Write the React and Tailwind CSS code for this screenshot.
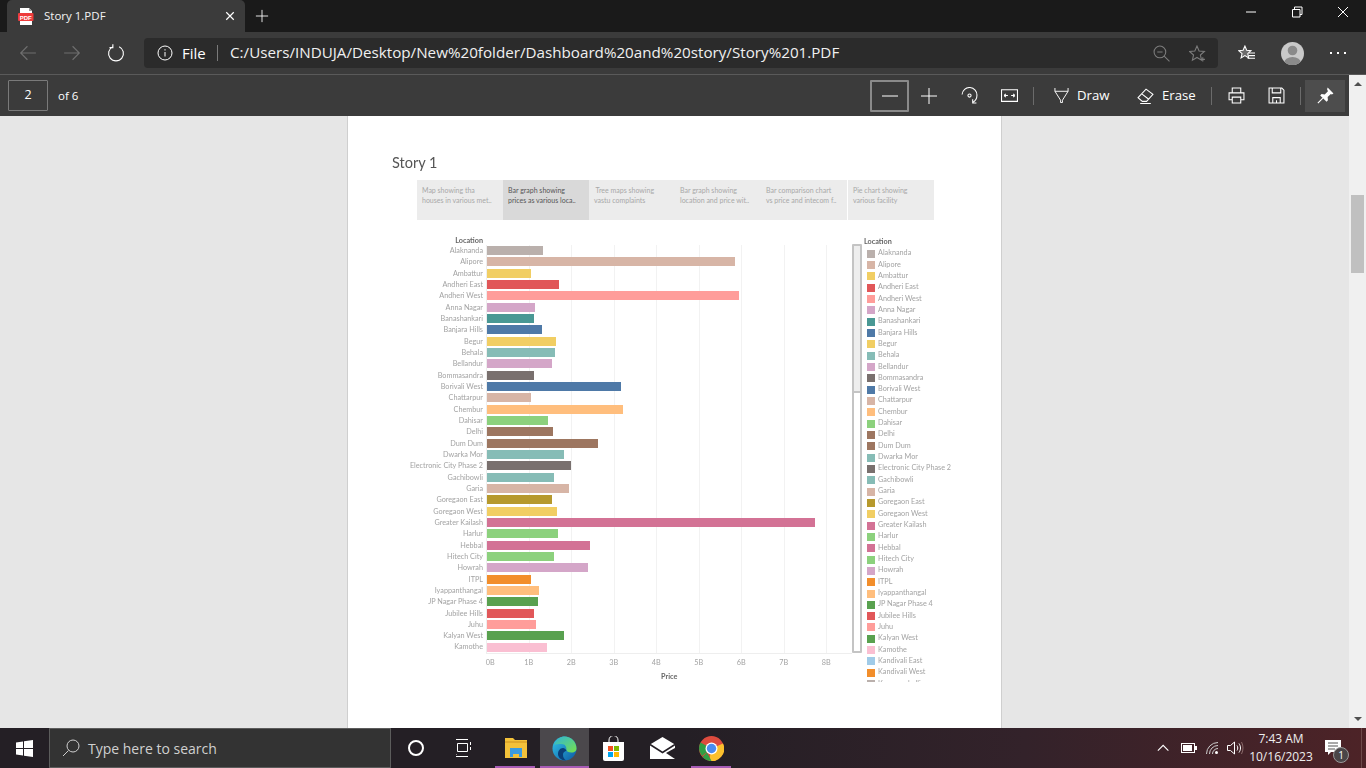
import React from "react";

const C = {
  gray: "#bab0ac",
  tan: "#d7b5a6",
  yellow: "#f1ce63",
  red: "#e15759",
  pink: "#ff9d9a",
  lilac: "#d4a6c8",
  teal: "#499894",
  blue: "#4e79a7",
  aqua: "#86bcb6",
  dark: "#79706e",
  peach: "#ffbe7d",
  green: "#8cd17d",
  brown: "#9d7660",
  olive: "#b6992d",
  rose: "#d37295",
  orange: "#f28e2b",
  leaf: "#59a14f",
  candy: "#fabfd2",
  sky: "#a0cbe8",
};

const rows = [
  ["Alaknanda", C.gray, 543],
  ["Alipore", C.tan, 735],
  ["Ambattur", C.yellow, 531],
  ["Andheri East", C.red, 559],
  ["Andheri West", C.pink, 739],
  ["Anna Nagar", C.lilac, 535],
  ["Banashankari", C.teal, 534],
  ["Banjara Hills", C.blue, 542],
  ["Begur", C.yellow, 556],
  ["Behala", C.aqua, 555],
  ["Bellandur", C.lilac, 552],
  ["Bommasandra", C.dark, 534],
  ["Borivali West", C.blue, 621],
  ["Chattarpur", C.tan, 531],
  ["Chembur", C.peach, 623],
  ["Dahisar", C.green, 548],
  ["Delhi", C.brown, 553],
  ["Dum Dum", C.brown, 598],
  ["Dwarka Mor", C.aqua, 564],
  ["Electronic City Phase 2", C.dark, 571],
  ["Gachibowli", C.aqua, 554],
  ["Garia", C.tan, 569],
  ["Goregaon East", C.olive, 552],
  ["Goregaon West", C.yellow, 557],
  ["Greater Kailash", C.rose, 815],
  ["Harlur", C.green, 558],
  ["Hebbal", C.rose, 590],
  ["Hitech City", C.green, 554],
  ["Howrah", C.lilac, 588],
  ["ITPL", C.orange, 531],
  ["Iyappanthangal", C.peach, 539],
  ["JP Nagar Phase 4", C.leaf, 538],
  ["Jubilee Hills", C.red, 534],
  ["Juhu", C.pink, 536],
  ["Kalyan West", C.leaf, 564],
  ["Kamothe", C.candy, 547],
];

const legendExtra = [
  ["Kandivali East", C.sky],
  ["Kandivali West", C.orange],
  ["Kasavanahalli", C.gray],
];

const tabs = [
  ["Map showing tha", "houses in various met.."],
  ["Bar graph showing", "prices as various loca.."],
  ["\u00a0Tree maps showing", "vastu complaints"],
  ["Bar graph showing", "location and price wit.."],
  ["Bar comparison chart", "vs price and intecom f.."],
  ["Pie chart showing", "various facility"],
];

const ticks = ["0B", "1B", "2B", "3B", "4B", "5B", "6B", "7B", "8B"];

const Line = ({ size = 16, children, className = "" }) => (
  <svg width={size} height={size} viewBox="0 0 16 16" fill="none" stroke="currentColor" strokeWidth="1" className={className}>
    {children}
  </svg>
);

const Btn = ({ w, children }) => (
  <div className={`flex items-center justify-center shrink-0 ${w}`}>{children}</div>
);

const TabStrip = () => (
  <div className="flex h-[32px] pl-[7px] bg-[#1a1a1a] text-white">
    <div className="flex items-center w-[238px] bg-[#3b3b3b] rounded-t-[5px] pl-[11px] pr-[9px]">
      <svg width="16" height="17" viewBox="0 0 16 17" className="shrink-0">
        <path d="M2 0h9l3 3v14H2z" fill="#fff" />
        <path d="M11 0l3 3h-3z" fill="#999" />
        <rect x="0" y="5" width="15.5" height="8" rx="1" fill="#ee3b3b" />
        <text x="7.7" y="11.6" textAnchor="middle" fontSize="6" fontWeight="700" fill="#fff" fontFamily="Liberation Sans">PDF</text>
      </svg>
      <span className="ml-[10px] text-[11.5px] text-[#f2f2f2]">Story 1.PDF</span>
      <Line size={12} className="ml-auto text-white">
        <path d="M3 3l10 10M13 3L3 13" strokeWidth="1.6" />
      </Line>
    </div>
    <Btn w="w-[34px]">
      <Line size={14}>
        <path d="M8 1v14M1 8h14" />
      </Line>
    </Btn>
    <div className="ml-auto flex h-[23px]">
      <Btn w="w-[46px]">
        <Line size={16}>
          <path d="M3 8h10" />
        </Line>
      </Btn>
      <Btn w="w-[46px]">
        <Line size={16}>
          <path d="M3.500 5.500h7.500v7.500H3.500zM5.500 5.500V3H13v7.500h-2" />
        </Line>
      </Btn>
      <Btn w="w-[46px]">
        <Line size={16}>
          <path d="M3 3l10 10M13 3L3 13" />
        </Line>
      </Btn>
    </div>
  </div>
);

const AddressRow = () => (
  <div className="flex items-center h-[43px] pl-[6px] bg-[#3b3b3b] text-white border-b border-[#5a5a5a]">
    <Btn w="w-[44px]">
      <Line size={18} className="text-[#6f6f6f]">
        <path d="M15 8H1.5M7.5 2l-6 6 6 6" />
      </Line>
    </Btn>
    <Btn w="w-[44px]">
      <Line size={18} className="text-[#6f6f6f]">
        <path d="M1 8h13.5M8.5 2l6 6-6 6" />
      </Line>
    </Btn>
    <Btn w="w-[44px]">
      <Line size={18}>
        <path d="M5.2 2.400a6.600 6.600 0 1 0 5.600 0M5.200 0.200v3h-3" />
      </Line>
    </Btn>
    <div className="flex items-center ml-[6px] w-[1074px] h-[30px] bg-[#2b2b2b] rounded-[4px] pl-[13px]">
      <Line size={16}>
        <circle cx="8" cy="8" r="7" />
        <path d="M8 7v4.500M8 4.200v1.300" />
      </Line>
      <span className="ml-[9px] w-[35px] text-[15px] leading-none">File</span>
      <span className="w-px h-[16px] bg-[#7a7a7a]" />
      <span className="ml-[12px] text-[15.2px] leading-none whitespace-nowrap text-[#f0f0f0]">
        C:/Users/INDUJA/Desktop/New%20folder/Dashboard%20and%20story/Story%201.PDF
      </span>
      <div className="ml-auto flex items-center pr-[12px] gap-[19px] text-[#7c7c7c]">
        <Line size={17}>
          <circle cx="6.500" cy="6.500" r="5.500" />
          <path d="M4 6.500h5M10.500 10.500l5 5" />
        </Line>
        <Line size={17}>
          <path d="M7.500 1l2 4.600 5 .5-3.800 3.300 1.100 4.800-4.300-2.500-4.300 2.500 1.100-4.800L.5 6.100l5-.5z" />
          <path d="M13 11.500v4M11 13.500h4" />
        </Line>
      </div>
    </div>
    <div className="ml-[5px] flex">
      <Btn w="w-[46px]">
        <Line size={17}>
          <path d="M6.500 1l1.700 4 4 .4-3 2.700.9 4-3.600-2.100-3.600 2.100.9-4-3-2.700 4-.4z" fill="currentColor" fillOpacity="0.25" />
          <path d="M10 7.500h6M10 10h6M9 12.500h7" />
        </Line>
      </Btn>
      <Btn w="w-[46px]">
        <svg width="23" height="23" viewBox="0 0 23 23">
          <clipPath id="avatar">
            <circle cx="11.500" cy="11.500" r="11.500" />
          </clipPath>
          <circle cx="11.500" cy="11.500" r="11.500" fill="#c9c9c9" />
          <g clipPath="url(#avatar)" fill="#8a8a8a">
            <circle cx="11.500" cy="8.500" r="4.800" />
            <ellipse cx="11.500" cy="21" rx="8.500" ry="6" />
          </g>
        </svg>
      </Btn>
      <Btn w="w-[46px]">
        <div className="flex gap-[5px]">
          <span className="w-[2px] h-[2px] bg-white" />
          <span className="w-[2px] h-[2px] bg-white" />
          <span className="w-[2px] h-[2px] bg-white" />
        </div>
      </Btn>
    </div>
  </div>
);

const Sep = ({ ml }) => <span className={`w-px h-[18px] bg-[#6b6b6b] shrink-0 ${ml}`} />;

const PdfToolbar = () => (
  <div className="flex items-center h-[41px] bg-[#3b3b3b] text-white shrink-0 pr-[4px]">
    <div className="ml-[8px] w-[40px] h-[31px] flex items-center justify-center border border-[#7a7a7a] rounded-[1px] text-[12.5px]">2</div>
    <span className="ml-[10px] text-[11.5px]">of 6</span>
    <div className="ml-auto flex items-center">
      <div className="w-[39px] h-[32px] flex items-center justify-center border-2 border-[#8a8a8a] rounded-[1px]">
        <Line size={16}>
          <path d="M0 8h16" />
        </Line>
      </div>
      <Btn w="w-[40px]">
        <Line size={16}>
          <path d="M8 0v16M0 8h16" />
        </Line>
      </Btn>
      <Btn w="w-[40px]">
        <Line size={17}>
          <path d="M1 7a7 7 0 0 1 14 1c0 3-1.500 5-4 6.500M11 11.500v3.500h3.500" />
          <circle cx="8" cy="8" r="1.500" />
        </Line>
      </Btn>
      <Btn w="w-[40px]">
        <Line size={17}>
          <path d="M.5 2.500h15v11H.5zM3 8h3.500M3 8l1.500-1.500M3 8l1.500 1.500M9.500 8H13M13 8l-1.500-1.500M13 8l-1.500 1.500" />
        </Line>
      </Btn>
      <Sep ml="ml-[4px]" />
      <Line size={15} className="ml-[20px] shrink-0">
        <path d="M1 0v3.500h14V0M1 3.500L7 13v2.500h2V13l6-9.500" />
      </Line>
      <span className="ml-[8px] w-[33px] text-[13.2px] leading-none">Draw</span>
      <Line size={17} className="ml-[27px] shrink-0">
        <path d="M1 10l7.500-8 6.500 5-6 6.500H5zM4.500 6.500l6.500 5M3 15.500h10" />
      </Line>
      <span className="ml-[8px] w-[32px] text-[13.2px] leading-none whitespace-nowrap">Erase</span>
      <Sep ml="ml-[17px]" />
      <Btn w="w-[40px] ml-[4px]">
        <Line size={17}>
          <path d="M4 5V1h8v4M4 12H1V5.500h14V12h-3M4 9.500h8v5.500H4z" />
        </Line>
      </Btn>
      <Btn w="w-[40px]">
        <Line size={17}>
          <path d="M1 1h12l2 2v12H1zM4 1v4.500h8V1M4.500 15v-5h7v5M8 15v-2.500" />
        </Line>
      </Btn>
      <Sep ml="ml-[4px]" />
      <div className="ml-[4px] w-[40px] h-[32px] bg-[#4d4d4d] flex items-center justify-center">
        <svg width="17" height="17" viewBox="0 0 16 16" fill="#fff">
          <path d="M10 .500l5.500 5.500-1.500 1-1-.500-3 3 .3 3-1.300 1.300L3 8l1.300-1.300 3 .3 3-3L9.500 2z" />
          <path d="M5.500 10.500L.800 15.200" stroke="#fff" fill="none" />
        </svg>
      </div>
    </div>
  </div>
);

const StoryTabs = () => (
  <div className="flex ml-[69px] mt-[8px] w-[517px] h-[40px] bg-[#ececec]">
    {tabs.map((t, i) => (
      <div
        key={i}
        className={`w-[86px] pl-[5px] pt-[5px] text-[7px] leading-[10px] whitespace-nowrap overflow-hidden ${i === 1 ? "bg-[#d9d9d9] text-[#555]" : "text-[#a8a8a8]"} ${i === 5 ? "border-l border-white w-[87px]" : ""}`}
      >
        <div>{t[0]}</div>
        <div>{t[1]}</div>
      </div>
    ))}
  </div>
);

const BarChart = () => (
  <div className="w-[504px] shrink-0">
    <div className="flex">
      <div className="ml-[51px] w-[87px] text-right pr-[3px]">
        <div className="h-[9px] leading-[9px] font-bold text-[#666]">Location</div>
        {rows.map((r) => (
          <div key={r[0]} className="h-[11.340px] leading-[11.340px] text-[#a3a3a3] whitespace-nowrap">
            {r[0]}
          </div>
        ))}
      </div>
      <div className="relative mt-[9px] w-[366px] h-[409px] border-l border-b border-[#eeeeee]">
        <div className="absolute inset-0 flex">
          {ticks.slice(1).map((t) => (
            <div key={t} className="w-[42.500px] h-full border-r border-[#f2f2f2]" />
          ))}
        </div>
        {rows.map((r) => (
          <div key={r[0]} className="relative h-[11.340px] flex items-center">
            <div className="h-[9px]" style={{ width: r[2] - 487, backgroundColor: r[1] }} />
          </div>
        ))}
      </div>
    </div>
    <div className="flex ml-[117px] mt-[4px] text-[#a3a3a3]">
      {ticks.map((t, i) => (
        <div key={t} className={`w-[42.500px] shrink-0 text-center ${i === 0 ? "pl-[8px]" : ""}`}>
          {t}
        </div>
      ))}
    </div>
    <div className="ml-[313px] mt-[3px] font-bold text-[#666]">Price</div>
  </div>
);

const Legend = () => (
  <div className="flex shrink-0 mt-[8px]">
    <div className="w-[10px] h-[409px] border-2 border-[#c4c4c4] rounded-[1px]">
      <div className="h-[147px] bg-[#eeeeee] border-b-2 border-[#c4c4c4]" />
    </div>
    <div className="ml-[2px] -mt-[7px] w-[95px] h-[445px] overflow-hidden">
      <div className="h-[11px] leading-[10px] font-bold text-[#666]">Location</div>
      {rows.concat(legendExtra).map((r) => (
        <div key={r[0]} className="h-[11.340px] flex items-center pl-[3px] text-[#a3a3a3] whitespace-nowrap">
          <span className="w-[8px] h-[8px] shrink-0 mr-[3px]" style={{ backgroundColor: r[1] }} />
          {r[0]}
        </div>
      ))}
    </div>
  </div>
);

const Paper = () => (
  <div className="w-[655px] h-full shrink-0 bg-white border-x border-[#cfcfcf] overflow-hidden">
    <div className="ml-[44px] mt-[37px] h-[19px] leading-[19px] text-[14.500px] text-[#555] font-['Lato',sans-serif] blur-[0.3px]">Story 1</div>
    <div className="font-['Lato',sans-serif] text-[7.250px] blur-[0.3px]">
      <StoryTabs />
      <div className="flex mt-[16px]">
        <BarChart />
        <Legend />
      </div>
    </div>
  </div>
);

const PageScrollbar = () => (
  <div className="w-[17px] shrink-0 bg-[#f0f0f0] relative flex flex-col items-center">
    <span className="mt-[7px] w-0 h-0 border-x-[4px] border-x-transparent border-b-[4px] border-b-[#505050]" />
    <div className="mt-[109px] w-[13px] h-[78px] bg-[#c0c0c0]" />
    <span className="mt-auto mb-[7px] w-0 h-0 border-x-[4px] border-x-transparent border-t-[4px] border-t-[#505050]" />
  </div>
);

const Tile = ({ w = "w-[49px]", bar, bg = "", children }) => (
  <div className={`relative h-full flex items-center justify-center shrink-0 ${w} ${bg}`}>
    {children}
    {bar && <span className={`absolute bottom-0 h-[2px] bg-[#a75bb5] ${bar}`} />}
  </div>
);

const Taskbar = () => (
  <div className="flex items-center h-[40px] shrink-0 text-white bg-[linear-gradient(90deg,#241f25_0%,#241f25_50%,#33222a_75%,#4d2327_100%)]">
    <Tile>
      <svg width="17" height="17" viewBox="0 0 17 17" fill="#fff">
        <path d="M0 2.500l7-1v6.500H0zM8 1.300L17 0v8H8zM0 9h7v6.500l-7-1zM8 9h9v8l-9-1.300z" />
      </svg>
    </Tile>
    <div className="flex items-center w-[342px] h-full bg-[#333333] border border-[#5c5c5c] pl-[12px] text-[#d0d0d0]">
      <svg width="18" height="18" viewBox="0 0 18 18" fill="none" stroke="currentColor">
        <circle cx="11" cy="7" r="6" />
        <path d="M6.500 11.500L1 17" />
      </svg>
      <span className="ml-[8px] text-[14px]">Type here to search</span>
    </div>
    <Tile w="w-[50px]">
      <span className="w-[16px] h-[16px] rounded-full border-[2.500px] border-white" />
    </Tile>
    <Tile w="w-[46px]">
      <svg width="16" height="20" viewBox="0 0 16 20" fill="none" stroke="#fff">
        <path d="M0 1.500h12M1.500 5.500h10v8h-10zM0 18.500h12M0 17v-1M14.500 4v3M14.500 9v3" />
      </svg>
    </Tile>
    <Tile w="w-[49px] ml-[4px]" bar="left-[4px] right-[5px]">
      <svg width="22" height="22" viewBox="0 0 22 22">
        <path d="M0 1h8l2 2h12v18H0z" fill="#f3c13a" />
        <path d="M0 4h22v2H0z" fill="#e0a92c" />
        <path d="M5 11h12v9h-3v-3H8v3H5z" fill="#3b9be0" />
      </svg>
    </Tile>
    <Tile bar="left-0 right-0" bg="bg-[#4b484c]">
      <svg width="25" height="25" viewBox="0 0 25 25">
        <defs>
          <linearGradient id="edge" x1="0" y1="0" x2="1" y2="1">
            <stop offset="0" stopColor="#33c6e8" />
            <stop offset="1" stopColor="#0c59a4" />
          </linearGradient>
          <linearGradient id="edgeTop" x1="0" y1="0" x2="1" y2="1">
            <stop offset="0" stopColor="#2fb5d8" />
            <stop offset="1" stopColor="#78e04a" />
          </linearGradient>
        </defs>
        <circle cx="12.500" cy="12.500" r="12" fill="url(#edge)" />
        <path d="M2 9C4 3 9 .5 12.500.5 19 .5 24.500 6 24.500 12.500c0 2-1.500 4-5 4-3 0-5-1-5-2.500 0-3-1-6-5-6-3 0-6 .5-7.500.5z" fill="url(#edgeTop)" />
        <path d="M11 12c-3 0-5 3-5 6 0 3 3 6.500 8 6.500-2-1.500-3-3-3-6 0-2.500 2-3 3.500-4-1-1.500-2-2.500-3.500-2.500z" fill="#0b3f78" />
      </svg>
    </Tile>
    <Tile>
      <svg width="23" height="25" viewBox="0 0 23 25">
        <path d="M7 7V4a4.500 4.500 0 0 1 9 0v3" fill="none" stroke="#fff" />
        <path d="M1 6h21v17a2 2 0 0 1-2 2H3a2 2 0 0 1-2-2z" fill="#fff" />
        <rect x="6" y="10" width="5" height="5" fill="#f25022" />
        <rect x="12" y="10" width="5" height="5" fill="#7fba00" />
        <rect x="6" y="16" width="5" height="5" fill="#00a4ef" />
        <rect x="12" y="16" width="5" height="5" fill="#ffb900" />
      </svg>
    </Tile>
    <Tile>
      <svg width="25" height="22" viewBox="0 0 25 22">
        <path d="M12.500 0L25 7.500V22H0V7.500z" fill="#fff" />
        <path d="M0 7.500l12.500 8 12.500-8" fill="none" stroke="#241f25" strokeWidth="1.500" />
        <path d="M25 22l-9-6 9-5z" fill="#241f25" />
      </svg>
    </Tile>
    <Tile bar="left-[4px] right-[5px]">
      <svg width="25" height="25" viewBox="0 0 25 25">
        <circle cx="12.500" cy="12.500" r="12.500" fill="#dd4b3e" />
        <path d="M12.500 12.500L3 20A12.500 12.500 0 0 1 1.500 6.500z" fill="#2f9e44" />
        <path d="M12.500 12.500l11.500-5A12.500 12.500 0 0 1 10 25z" fill="#fbc02d" />
        <path d="M12.500 25L8 16.500 3.500 21a12.500 12.500 0 0 0 9 4z" fill="#2f9e44" />
        <circle cx="12.500" cy="12.500" r="6" fill="#fff" />
        <circle cx="12.500" cy="12.500" r="4.700" fill="#4a8cf0" />
      </svg>
    </Tile>
    <div className="ml-auto flex items-center h-full">
      <Line size={14}>
        <path d="M1 11l6-6 6 6" strokeWidth="1.300" />
      </Line>
      <svg width="16" height="10" viewBox="0 0 16 10" className="ml-[10px]">
        <rect x=".5" y=".5" width="13" height="9" fill="none" stroke="#fff" />
        <rect x="2" y="2" width="9" height="6" fill="#fff" />
        <rect x="14" y="3" width="2" height="4" fill="#fff" />
      </svg>
      <svg width="14" height="13" viewBox="0 0 14 13" fill="none" stroke="#cfcfcf" className="ml-[9px]">
        <path d="M.5 12A11.500 11.500 0 0 1 12 .5M3.500 12A8.500 8.500 0 0 1 12 3.500M6.500 12A5.500 5.500 0 0 1 12 6.500" />
        <circle cx="10.500" cy="10.500" r="1.500" fill="#fff" stroke="none" />
      </svg>
      <svg width="17" height="14" viewBox="0 0 17 14" fill="none" stroke="#fff" className="ml-[7px]">
        <path d="M.5 4.500h3l4-3.500v12l-4-3.500h-3zM10 4.500c1 1.500 1 3.500 0 5M12 2.500c2 3 2 6 0 9" />
        <path d="M14.500 1c2 4 2 8 0 12" stroke="#8a6a6a" />
      </svg>
      <div className="ml-[2px] w-[70px] text-center text-[12px] leading-[18px] text-[#eee]">
        <div>7:43 AM</div>
        <div>10/16/2023</div>
      </div>
      <div className="relative ml-[4px] w-[30px] h-full">
        <svg width="16" height="15" viewBox="0 0 16 15" className="absolute left-[5px] top-[12px]">
          <path d="M0 0h16v12H6l-3 3v-3H0z" fill="#fff" />
          <path d="M3 3h10M3 6h10M3 9h7" stroke="#555" />
        </svg>
        <span className="absolute left-[13px] top-[19px] w-[16px] h-[16px] rounded-full bg-[#4a4648] border border-[#999] flex items-center justify-center text-[10px] leading-none">1</span>
      </div>
      <span className="ml-[11px] w-px h-full bg-[#6e4a4a]" />
      <span className="w-[4px]" />
    </div>
  </div>
);

export default function App() {
  return (
    <div className="w-[1366px] h-[768px] flex flex-col overflow-hidden font-['Open_Sans','Noto_Sans',sans-serif] bg-[#e6e6e6]">
      <TabStrip />
      <AddressRow />
      <div className="flex flex-1 min-h-0">
        <div className="flex flex-col flex-1 min-w-0">
          <PdfToolbar />
          <div className="flex flex-1 min-h-0 justify-center bg-[#e6e6e6]">
            <Paper />
          </div>
        </div>
        <PageScrollbar />
      </div>
      <Taskbar />
    </div>
  );
}
